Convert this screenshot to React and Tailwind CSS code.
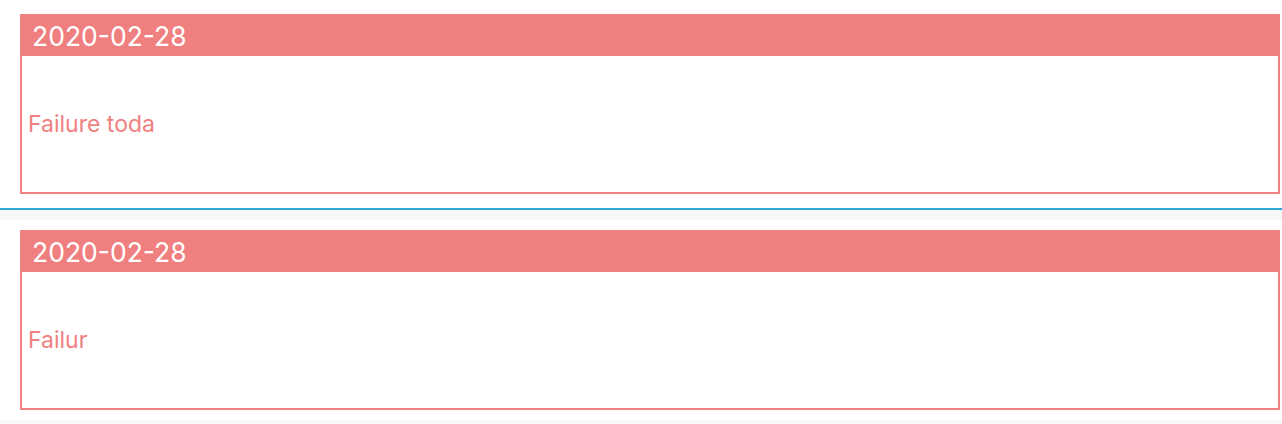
export default function App() {
  const Card = ({ text }) => (
    <div className="ml-5 mr-[2px] border-2 border-[#f08080] bg-white">
      <div className="h-10 bg-[#f08080] flex items-center pl-[10px] text-white text-[26.5px] leading-none">
        2020-02-28
      </div>
      <div className="h-[136px] flex items-center pl-[6px] text-[#f08080] text-[23px] leading-none">
        {text}
      </div>
    </div>
  );
  return (
    <div className="bg-white w-[1282px] h-[424px] overflow-hidden" style={{ fontFamily: "Inter, 'Noto Sans', sans-serif" }}>
      <div className="pt-[14px] pb-[14px] border-b-2 border-[#30a9d9]">
        <Card text="Failure toda" />
      </div>
      <div className="h-[10px] bg-[#f8f8f8]" />
      <div className="py-[10px]">
        <Card text="Failur" />
      </div>
      <div className="h-[4px] bg-[#f8f8f8]" />
    </div>
  );
}
